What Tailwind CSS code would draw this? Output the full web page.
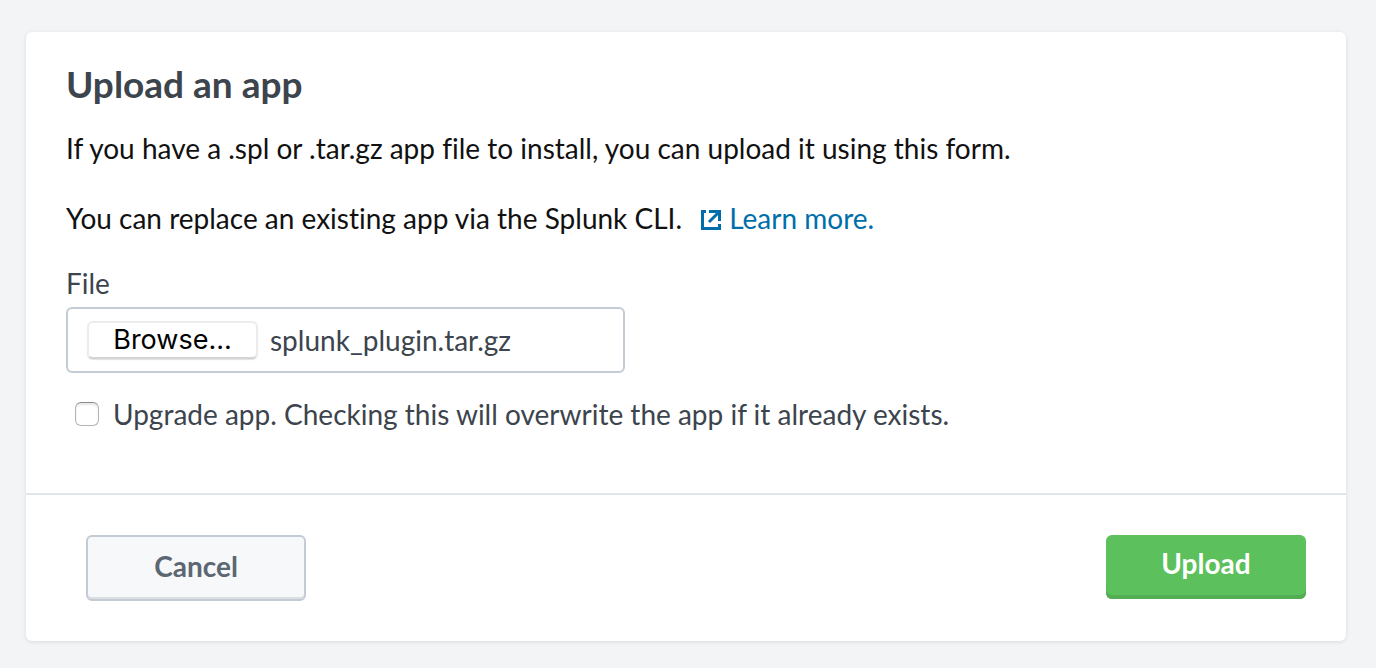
<!DOCTYPE html>
<html lang="en">
<head>
<meta charset="utf-8">
<title>Upload an app</title>
<script src="https://cdn.jsdelivr.net/npm/@tailwindcss/browser@4"></script>
</head>
<body class="min-h-screen bg-[#f2f4f5] pt-8 pl-[26px] pr-[30px] pb-6 font-['Lato','Liberation_Sans',sans-serif] text-[28px] leading-10 text-[#3c444d] [font-variant-ligatures:none]">
<form class="rounded-md bg-white shadow-[0_1px_4px_rgba(0,0,0,0.1)]">
  <div class="px-10 pt-[30px] pb-[59px]">
    <h1 class="text-[37px] leading-[44px] font-bold">Upload an app</h1>
    <p class="mt-[22px] text-[#111]">If you have a .spl or .tar.gz app file to install, you can upload it using this form.</p>
    <p class="mt-[30px] text-[#111]">You can replace an existing app via the Splunk CLI. <a href="#" class="ml-3 text-[#006eaa]"><svg class="mr-2 inline-block h-5 w-5 align-[-1px]" viewBox="0 0 20 20" fill="none" stroke="currentColor" stroke-width="3"><path d="M5 1.500H1.500V18.500H18.500V14M8 1.500H18.500V11M18 2L8 12"/></svg>Learn more.</a></p>
    <label for="file" class="mt-[25px] block">File</label>
    <div class="mt-1 flex h-[66px] w-[559px] max-w-full items-center gap-3 rounded-md border-2 border-[#c3cbd4] px-[19px]">
      <button id="file" type="button" class="flex h-[38px] w-[171px] items-center justify-center rounded-md border-2 border-[#ececec] border-b-[#d4d4d4] bg-white font-['Inter',sans-serif] text-[27px] text-black shadow-[0_1px_1px_rgba(0,0,0,0.12)]">Browse...</button>
      <span>splunk_plugin.tar.gz</span>
    </div>
    <label class="mt-[21px] flex items-center gap-[14px] pl-[9px]"><input type="checkbox" class="size-6 shrink-0 appearance-none rounded-md border border-[#b4b4b4] border-t-[#8c8c8c] bg-white shadow-[inset_0_2px_2px_rgba(0,0,0,0.1)] checked:bg-[#006eaa]">Upgrade app. Checking this will overwrite the app if it already exists.</label>
  </div>
  <div class="flex items-start justify-between border-t-2 border-[#e1e6eb] pt-10 pr-10 pb-10 pl-[60px] font-bold">
    <button type="button" class="h-[66px] w-[220px] rounded-md border-2 border-[#c3cbd4] bg-[#f7f8fa] pb-1 text-[#5c6773] shadow-[inset_0_-2px_0_#dcdfe2]">Cancel</button>
    <button type="submit" class="h-16 w-[200px] rounded-md bg-[#5cc05c] pb-2 text-white shadow-[inset_0_-4px_0_#53ae53]">Upload</button>
  </div>
</form>
</body>
</html>
